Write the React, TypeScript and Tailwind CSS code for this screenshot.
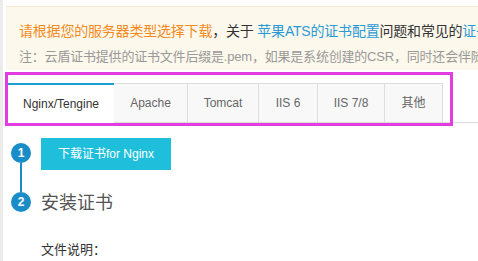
const tabs = [
  { label: 'Nginx/Tengine', w: 'w-[106px]', active: true },
  { label: 'Apache', w: 'w-[74px]' },
  { label: 'Tomcat', w: 'w-[71px]' },
  { label: 'IIS 6', w: 'w-[59px]' },
  { label: 'IIS 7/8', w: 'w-[67px]' },
  { label: '其他', w: 'w-[58px]' },
];

function StepDot({ n }: { n: number }) {
  return (
    <div className="w-[20px] h-[20px] rounded-full bg-[#1a8dc9] text-white text-[12px] font-semibold flex items-center justify-center leading-none">
      {n}
    </div>
  );
}

export default function App() {
  return (
    <div
      className="w-[478px] h-[261px] overflow-hidden bg-white flex"
      style={{ fontFamily: '"Liberation Sans", "Noto Sans CJK SC", sans-serif' }}
    >
      <div className="w-[3px] shrink-0 bg-[#ececec]" />
      <div className="flex-1 pl-[2px] pt-[6px] min-w-0">
        {/* notice */}
        <div className="ml-[1px] w-[640px] h-[64px] bg-[#fdf8ec] border-t border-[#f5ecd7] pl-[13px] pt-[14px] whitespace-nowrap">
          <div className="text-[14px] leading-[20px] text-[#333] tracking-[-0.2px]">
            <span className="text-[#f48a1d]">请根据您的服务器类型选择下载</span>
            <span>，关于 </span>
            <span className="text-[#2a9ad6]">苹果ATS的证书配置</span>
            <span>问题和常见的</span>
            <span className="text-[#2a9ad6]">证书格式问题</span>
          </div>
          <div className="mt-[6px] text-[13px] leading-[20px] text-[#999] tracking-[-0.2px]">
            注：云盾证书提供的证书文件后缀是.pem，如果是系统创建的CSR，同时还会伴随证书私钥文件
          </div>
        </div>

        {/* tabs */}
        <div className="relative pt-[13px]">
          <div className="flex border-b border-[#ddd] pl-[3px]">
            {tabs.map((t) =>
              t.active ? (
                <div
                  key={t.label}
                  className={`${t.w} h-[40px] -mb-px bg-white border-t-2 border-[#1a9fd0] flex items-center justify-center text-[12px] text-[#333]`}
                >
                  {t.label}
                </div>
              ) : (
                <div
                  key={t.label}
                  className={`${t.w} h-[39px] bg-[#f8f8f8] border-t border-r border-[#ddd] flex items-center justify-center text-[12px] text-[#666]`}
                >
                  {t.label}
                </div>
              )
            )}
          </div>
          <div className="absolute left-0 top-[2px] w-[448px] h-[54px] border-[3px] border-[#e23de0] pointer-events-none" />
        </div>

        {/* steps */}
        <div className="flex pt-[15px]">
          <div className="ml-[6px] w-[20px] flex flex-col items-center pt-[5px]">
            <StepDot n={1} />
            <div className="w-[2px] h-[29px] bg-[#1a8dc9]" />
            <StepDot n={2} />
          </div>
          <div className="ml-[10px]">
            <button className="w-[130px] h-[32px] bg-[#1fbfdc] text-white text-[12px] flex items-center justify-center">
              下载证书for Nginx
            </button>
            <div className="mt-[21px] text-[18px] leading-[24px] text-[#555]">安装证书</div>
            <div className="mt-[25px] text-[13px] leading-[20px] text-[#333]">文件说明：</div>
          </div>
        </div>
      </div>
    </div>
  );
}
